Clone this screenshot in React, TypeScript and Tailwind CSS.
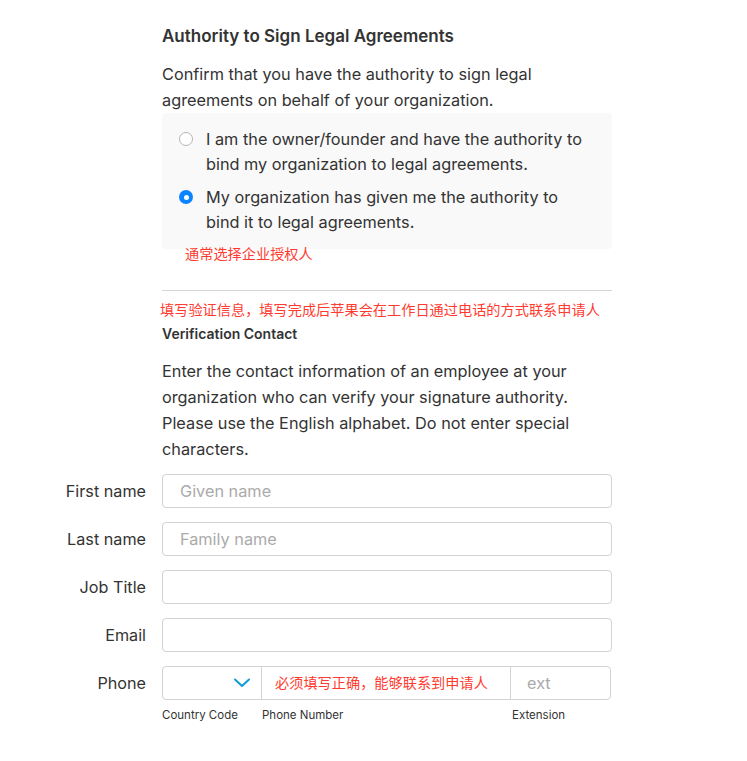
import React from "react";

const font = { fontFamily: 'Inter, "Noto Sans CJK SC", sans-serif' };

function Row({ label, children }: { label: string; children: React.ReactNode }) {
  return (
    <div className="flex items-center">
      <div className="w-[146px] pr-0 text-right text-[16.2px] text-[#333]">{label}</div>
      <div className="ml-[16px] w-[450px]">{children}</div>
    </div>
  );
}

function Input({ placeholder }: { placeholder?: string }) {
  return (
    <div className="flex h-[34px] items-center rounded-[4px] border border-[#d2d2d7] bg-white px-[17px] text-[16.3px] text-[#aaa]">
      {placeholder}
    </div>
  );
}

export default function App() {
  return (
    <div className="min-h-[761px] w-[747px] bg-white text-[#333]" style={font}>
      <div className="ml-[162px] w-[450px] pt-[25px]">
        <div className="text-[17px] font-semibold leading-[22px] text-[#333]">Authority to Sign Legal Agreements</div>
        <p className="mt-[14px] text-[16.3px] leading-[26px]">
          Confirm that you have the authority to sign legal agreements on behalf of your organization.
        </p>
        <div className="rounded-[4px] bg-[#f9f9f9] pb-[14px] pl-[17px] pr-[20px] pt-[14px]">
          <div className="flex">
            <div className="mt-[5px] h-[14px] w-[14px] shrink-0 rounded-full border border-[#b5b5b5] bg-white" />
            <div className="ml-[13px] text-[16.3px] leading-[25px]">
              I am the owner/founder and have the authority to bind my organization to legal agreements.
            </div>
          </div>
          <div className="mt-[8px] flex">
            <div className="mt-[5px] flex h-[14px] w-[14px] shrink-0 items-center justify-center rounded-full bg-[#0a84ff]">
              <div className="h-[5px] w-[5px] rounded-full bg-white" />
            </div>
            <div className="ml-[13px] text-[16.3px] leading-[25px]">
              My organization has given me the authority to bind it to legal agreements.
            </div>
          </div>
        </div>
        <div className="-mt-[3px] ml-[23px] text-[14.2px] leading-[16px] text-[#ff3b30]">通常选择企业授权人</div>
        <div className="mt-[28px] h-px bg-[#d6d6d6]" />
        <div className="-ml-[2px] mt-[11px] text-[14.2px] leading-[16px] text-[#ff3b30]">
          填写验证信息，填写完成后苹果会在工作日通过电话的方式联系申请人
        </div>
        <div className="mt-[8px] text-[14px] font-semibold leading-[16px]">Verification Contact</div>
        <p className="mt-[16px] text-[16.3px] leading-[26px]">
          Enter the contact information of an employee at your organization who can verify your signature authority. Please use the English alphabet. Do not enter special characters.
        </p>
      </div>
      <div className="mt-[12px] flex flex-col gap-[14px]">
        <Row label="First name">
          <Input placeholder="Given name" />
        </Row>
        <Row label="Last name">
          <Input placeholder="Family name" />
        </Row>
        <Row label="Job Title">
          <Input />
        </Row>
        <Row label="Email">
          <Input />
        </Row>
        <Row label="Phone">
          <div className="flex h-[34px] w-[449px] rounded-[4px] border border-[#d2d2d7] bg-white">
            <div className="flex w-[99px] items-center justify-end border-r border-[#d2d2d7] pr-[10px]">
              <svg width="18" height="10" viewBox="0 0 18 10" fill="none">
                <path d="M2 1.5 L9 8 L16 1.5" stroke="#0f9bd7" strokeWidth="2" strokeLinecap="round" strokeLinejoin="round" />
              </svg>
            </div>
            <div className="flex w-[249px] items-center border-r border-[#d2d2d7] pl-[13px] text-[14.2px] text-[#ff3b30]">
              必须填写正确，能够联系到申请人
            </div>
            <div className="flex flex-1 items-center pl-[16px] text-[16.3px] text-[#aaa]">ext</div>
          </div>
        </Row>
      </div>
      <div className="ml-[162px] mt-[7px] flex text-[11.5px] leading-[16px] text-[#333]">
        <div className="w-[100px]">Country Code</div>
        <div className="w-[250px]">Phone Number</div>
        <div>Extension</div>
      </div>
    </div>
  );
}
